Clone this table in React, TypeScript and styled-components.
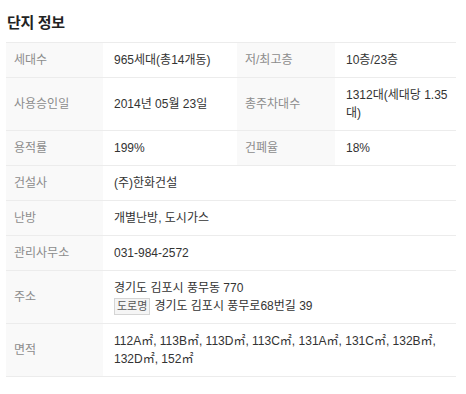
import React from "react";
import styled, { createGlobalStyle } from "styled-components";

const Global = createGlobalStyle`
  html, body { margin: 0; padding: 0; background: #fff; }
  body {
    font-family: "Liberation Sans", "Noto Sans CJK KR", Arial, sans-serif;
    -webkit-font-smoothing: antialiased;
  }
`;

const Section = styled.section`
  width: 450px;
  padding: 0 6px;
`;

const Title = styled.h2`
  margin: 0;
  height: 42px;
  display: flex;
  align-items: center;
  padding-left: 1px;
  font-size: 15px;
  font-weight: 700;
  color: #222;
  letter-spacing: -0.3px;
`;

const Table = styled.div`
  display: grid;
  grid-template-columns: 97px 134px 98px 1fr;
  border-top: 1px solid #ececec;
  font-size: 12px;
  line-height: 18px;
`;

const Label = styled.div`
  display: flex;
  align-items: center;
  background: #f9f9f9;
  color: #8c8c8c;
  padding: 8px 8px;
  border-bottom: 1px solid #ececec;
`;

const Value = styled.div<{ $span?: number; $breakAll?: boolean }>`
  display: flex;
  flex-direction: column;
  justify-content: center;
  grid-column: span ${(p) => p.$span ?? 1};
  color: #333;
  padding: 8px ${(p) => (p.$breakAll ? "6px" : "12px")} 8px 11px;
  border-bottom: 1px solid #ececec;
  word-break: ${(p) => (p.$breakAll ? "break-all" : "keep-all")};
`;

const Line = styled.div`
  display: flex;
  align-items: center;
  gap: 4px;
`;

const Badge = styled.span`
  display: inline-block;
  font-size: 11px;
  line-height: 13px;
  padding: 1px 2px;
  border: 1px solid #d5d5d5;
  background: #f5f5f5;
  color: #555;
`;

export default function App() {
  return (
    <>
      <Global />
      <Section>
        <Title>단지 정보</Title>
        <Table>
          <Label>세대수</Label>
          <Value>965세대(총14개동)</Value>
          <Label>저/최고층</Label>
          <Value>10층/23층</Value>

          <Label>사용승인일</Label>
          <Value>2014년 05월 23일</Value>
          <Label>총주차대수</Label>
          <Value $breakAll>1312대(세대당 1.35대)</Value>

          <Label>용적률</Label>
          <Value>199%</Value>
          <Label>건폐율</Label>
          <Value>18%</Value>

          <Label>건설사</Label>
          <Value $span={3}>(주)한화건설</Value>

          <Label>난방</Label>
          <Value $span={3}>개별난방, 도시가스</Value>

          <Label>관리사무소</Label>
          <Value $span={3}>031-984-2572</Value>

          <Label>주소</Label>
          <Value $span={3}>
            <Line>경기도 김포시 풍무동 770</Line>
            <Line>
              <Badge>도로명</Badge>경기도 김포시 풍무로68번길 39
            </Line>
          </Value>

          <Label>면적</Label>
          <Value $span={3}>
            112A㎡, 113B㎡, 113D㎡, 113C㎡, 131A㎡, 131C㎡, 132B㎡, 132D㎡, 152㎡
          </Value>
        </Table>
      </Section>
    </>
  );
}
